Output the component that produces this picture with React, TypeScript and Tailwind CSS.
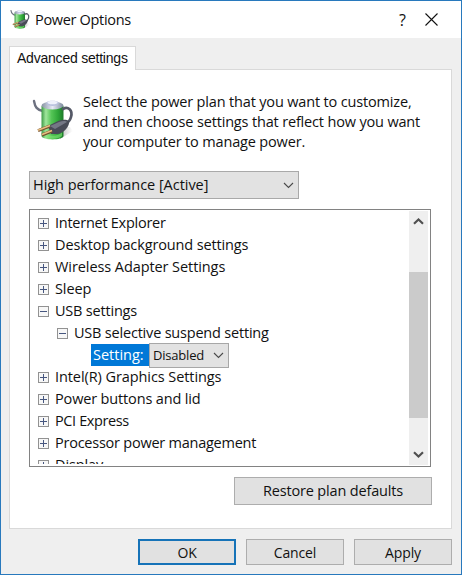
import React from "react";

function PowerIcon({ className }: { className: string }) {
  return (
    <svg viewBox="0 0 42 44" className={className}>
      <defs>
        <linearGradient id="cell" x1="0" x2="1" y1="0" y2="0">
          <stop offset="0" stopColor="#3d9a46" />
          <stop offset=".2" stopColor="#a0e69c" />
          <stop offset=".45" stopColor="#55c556" />
          <stop offset=".75" stopColor="#2fa638" />
          <stop offset="1" stopColor="#1d7a2a" />
        </linearGradient>
        <linearGradient id="cap" x1="0" x2="1" y1="0" y2="0">
          <stop offset="0" stopColor="#8793a3" />
          <stop offset=".5" stopColor="#e6e9f5" />
          <stop offset="1" stopColor="#7a899b" />
        </linearGradient>
        <linearGradient id="shade" x1="0" x2="1" y1="0" y2="0">
          <stop offset="0" stopColor="#999" stopOpacity=".7" />
          <stop offset="1" stopColor="#bbb" stopOpacity="0" />
        </linearGradient>
      </defs>
      <path d="M28 41 L41 33 L38 29 L28 29Z" fill="url(#shade)" />
      <path d="M2 3 C3 9 5 12 11 13" fill="none" stroke="#6d7180" strokeWidth="2.4" strokeLinecap="round" />
      <path d="M9.500 8 V38 C10 42.500 31 42.500 31.500 38 V8Z" fill="url(#cell)" />
      <path d="M12 34 C16 39 26 39 30 34 L30 38 C26 41.500 15 41.500 12 38Z" fill="#80e474" opacity=".6" />
      <ellipse cx="20.500" cy="7.500" rx="11" ry="4" fill="url(#cap)" />
      <path d="M14.500 6 V4.500 C15 2 26 2 26.500 4.500 V6 C25 8.500 16 8.500 14.500 6Z" fill="#b9c0de" />
      <ellipse cx="20.500" cy="4.500" rx="5" ry="1.800" fill="#eff1fb" />
      <path d="M31 11 C36 8 41 12 39 19 C38 23 36 25 32 27" fill="none" stroke="#555967" strokeWidth="2.700" strokeLinecap="round" />
      <path d="M16 28 L24 24 C29 21.500 34 21 37 23 C38 28 32 35 26 36 L19 36Z" fill="#484b57" />
      <path d="M18 28 L27 24 C31 22.500 34 23 35 24 L23 31Z" fill="#747785" />
      <path d="M18 28 L6 32.700 M20 33 L10 37" stroke="#75502d" strokeWidth="3" />
      <path d="M18 27.500 L6 32.200 M20 32.500 L10 36.500" stroke="#e6bd80" strokeWidth="1.700" />
    </svg>
  );
}

function Chevron({ className = "" }: { className?: string }) {
  return (
    <svg viewBox="0 0 11 7" className={`h-[7px] w-[11px] shrink-0 ${className}`}>
      <path d="M1 1 L5.500 5.500 L10 1" fill="none" stroke="#4a4a4a" strokeWidth="1.100" />
    </svg>
  );
}

function ScrollArrow({ className = "" }: { className?: string }) {
  return (
    <svg viewBox="0 0 11 7" className={`h-[7px] w-[11px] ${className}`}>
      <path d="M1 5.700 L5.500 1.500 L10 5.700" fill="none" stroke="#505050" strokeWidth="2.200" />
    </svg>
  );
}

function Expander({ open }: { open?: boolean }) {
  return (
    <svg viewBox="0 0 11 11" className="mt-px h-[11px] w-[11px] shrink-0">
      <rect x=".5" y=".5" width="10" height="10" fill="#f7f7f7" stroke="#929292" />
      <path d={open ? "M2 5.500H9" : "M2 5.500H9M5.500 2V9"} stroke="#46567f" />
    </svg>
  );
}

function Row({ label, open, nested, tracking }: { label: string; open?: boolean; nested?: boolean; tracking: string }) {
  return (
    <div className={`flex h-[22px] items-center gap-[6px] ${nested ? "pl-[27px]" : "pl-2"}`}>
      <Expander open={open} />
      <span className={tracking}>{label}</span>
    </div>
  );
}

function Button({ label, className }: { label: string; className: string }) {
  return (
    <button className={`flex items-center justify-center bg-[#e1e1e1] ${className}`}>
      <span>{label}</span>
    </button>
  );
}

export default function App() {
  return (
    <div className="flex h-[575px] w-[462px] flex-col overflow-hidden border border-[#2879bd] bg-[#efefef] font-['Open_Sans','Noto_Sans',sans-serif] text-[14.5px] whitespace-nowrap text-[#111]">
      <header className="flex h-[37px] shrink-0 items-center bg-white pl-[9px]">
        <PowerIcon className="h-[21px] w-[20px]" />
        <span className="ml-[5px] text-[14.5px] tracking-[-0.32px]">Power Options</span>
        <span className="ml-auto mr-[19px] text-[16px]">?</span>
        <svg viewBox="0 0 13 13" className="mr-[23px] h-[13px] w-[13px]">
          <path d="M.5 .5 L12.500 12.500 M12.500 .5 L.5 12.500" stroke="#111" strokeWidth="1.100" />
        </svg>
      </header>

      <div className="px-2 pt-2">
        <div className="relative z-10 -mb-px flex h-6 w-[127px] items-center border border-b-0 border-[#d9d9d9] bg-white pl-[7px] font-['Liberation_Sans',sans-serif]">
          <span className="text-[14px] tracking-[-0.22px]">Advanced settings</span>
        </div>
        <main className="flex h-[460px] w-[443px] flex-col border border-[#d9d9d9] bg-white pl-[19px]">
          <div className="flex h-[101px] pt-[22px]">
            <PowerIcon className="mt-[6px] ml-[3px] h-[44px] w-[42px]" />
            <p className="ml-[9px] leading-[20px] tracking-[-0.165px]">
              Select the power plan that you want to customize,
              <br />
              and then choose settings that reflect how you want
              <br />
              your computer to manage power.
            </p>
          </div>

          <div className="flex h-7 w-[270px] items-center justify-between border border-[#a9a9a9] bg-[#e2e2e2] pr-[4px] pl-[3px]">
            <span className="tracking-[-0.04px]">High performance [Active]</span>
            <Chevron />
          </div>

          <div className="mt-[10px] flex h-[258px] w-[402px] border border-[#828282] p-px pr-[2px]">
            <div className="mb-px flex-1 overflow-hidden pt-px">
              <div className="-ml-px">
                <Row label="Internet Explorer" tracking="tracking-[-0.26px]" />
                <Row label="Desktop background settings" tracking="tracking-[-0.13px]" />
                <Row label="Wireless Adapter Settings" tracking="tracking-[-0.08px]" />
                <Row label="Sleep" tracking="tracking-[-0.1px]" />
                <Row label="USB settings" open tracking="tracking-[-0.2px]" />
                <Row label="USB selective suspend setting" open nested tracking="tracking-[-0.2px]" />
                <div className="flex h-[22px] pl-[61px]">
                  <span className="flex h-[22px] w-[58px] items-center bg-[#0078d7] pl-[2px] text-white">Setting:</span>
                  <div className="-mt-px flex h-[25px] w-20 items-center justify-between border border-[#a7a7a7] bg-[#e2e2e2] pr-[4px] pl-[3px] text-[13px]">
                    <span className="tracking-[-0.2px]">Disabled</span>
                    <Chevron />
                  </div>
                </div>
                <Row label="Intel(R) Graphics Settings" tracking="tracking-[-0.08px]" />
                <Row label="Power buttons and lid" tracking="tracking-[-0.15px]" />
                <Row label="PCI Express" tracking="tracking-[-0.38px]" />
                <Row label="Processor power management" tracking="tracking-[-0.24px]" />
                <Row label="Display" tracking="tracking-[-0.1px]" />
              </div>
            </div>
            <div className="flex w-[19px] flex-col items-center bg-[#efefef]">
              <ScrollArrow className="mt-[7px]" />
              <div className="mt-[47px] h-[146px] w-full bg-[#cbcbcb]" />
              <ScrollArrow className="mt-[33px] rotate-180" />
            </div>
          </div>

          <Button label="Restore plan defaults" className="mt-[10px] ml-[205px] h-7 w-[198px] border border-[#adadad] tracking-[-0.17px]" />
        </main>
      </div>

      <footer className="mt-[10px] flex gap-[10px] pl-[137px] text-[14px] tracking-[-0.15px]">
        <Button label="OK" className="h-[26px] w-[98px] border-2 border-[#1673b8]" />
        <Button label="Cancel" className="h-[26px] w-[98px] border border-[#adadad]" />
        <Button label="Apply" className="h-[26px] w-[98px] border border-[#adadad]" />
      </footer>
    </div>
  );
}
